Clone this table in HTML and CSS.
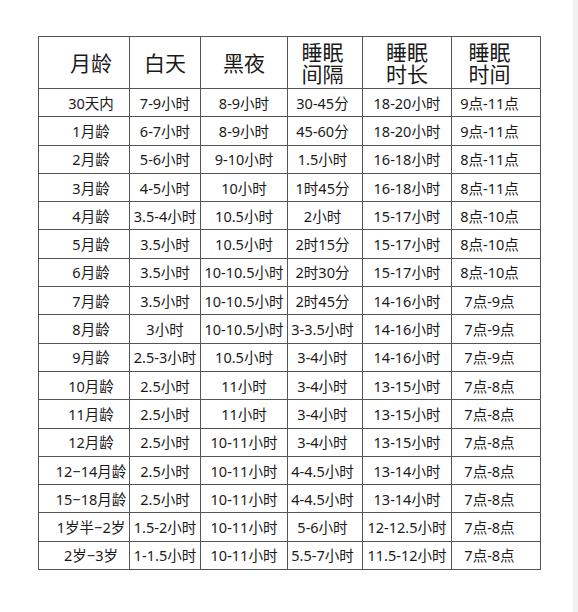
FILE: index.html
```html
<!DOCTYPE html>
<html lang="zh-CN">
<head>
<meta charset="utf-8">
<title>宝宝睡眠时间表</title>
<link rel="stylesheet" href="styles.css">
</head>
<body>
<div class="page">
<table class="sleep">
  <colgroup>
    <col class="c1"><col class="c2"><col class="c3"><col class="c4"><col class="c5"><col class="c6">
  </colgroup>
  <thead>
    <tr>
      <th class="first">月龄</th><th>白天</th><th>黑夜</th><th class="mid"><span class="ln">睡眠</span><span class="ln">间隔</span></th><th><span class="ln">睡眠</span><span class="ln">时长</span></th><th class="last"><span class="ln">睡眠</span><span class="ln">时间</span></th>
    </tr>
  </thead>
  <tbody>
    <tr><td class="first">30天内</td><td>7-9小时</td><td>8-9小时</td><td class="mid">30-45分</td><td>18-20小时</td><td class="last">9点-11点</td></tr>
    <tr><td class="first">1月龄</td><td>6-7小时</td><td>8-9小时</td><td class="mid">45-60分</td><td>18-20小时</td><td class="last">9点-11点</td></tr>
    <tr><td class="first">2月龄</td><td>5-6小时</td><td>9-10小时</td><td class="mid">1.5小时</td><td>16-18小时</td><td class="last">8点-11点</td></tr>
    <tr><td class="first">3月龄</td><td>4-5小时</td><td>10小时</td><td class="mid">1时45分</td><td>16-18小时</td><td class="last">8点-11点</td></tr>
    <tr><td class="first">4月龄</td><td>3.5-4小时</td><td>10.5小时</td><td class="mid">2小时</td><td>15-17小时</td><td class="last">8点-10点</td></tr>
    <tr><td class="first">5月龄</td><td>3.5小时</td><td>10.5小时</td><td class="mid">2时15分</td><td>15-17小时</td><td class="last">8点-10点</td></tr>
    <tr><td class="first">6月龄</td><td>3.5小时</td><td>10-10.5小时</td><td class="mid">2时30分</td><td>15-17小时</td><td class="last">8点-10点</td></tr>
    <tr><td class="first">7月龄</td><td>3.5小时</td><td>10-10.5小时</td><td class="mid">2时45分</td><td>14-16小时</td><td class="last">7点-9点</td></tr>
    <tr><td class="first">8月龄</td><td>3小时</td><td>10-10.5小时</td><td class="mid">3-3.5小时</td><td>14-16小时</td><td class="last">7点-9点</td></tr>
    <tr><td class="first">9月龄</td><td>2.5-3小时</td><td>10.5小时</td><td class="mid">3-4小时</td><td>14-16小时</td><td class="last">7点-9点</td></tr>
    <tr><td class="first">10月龄</td><td>2.5小时</td><td>11小时</td><td class="mid">3-4小时</td><td>13-15小时</td><td class="last">7点-8点</td></tr>
    <tr><td class="first">11月龄</td><td>2.5小时</td><td>11小时</td><td class="mid">3-4小时</td><td>13-15小时</td><td class="last">7点-8点</td></tr>
    <tr><td class="first">12月龄</td><td>2.5小时</td><td>10-11小时</td><td class="mid">3-4小时</td><td>13-15小时</td><td class="last">7点-8点</td></tr>
    <tr><td class="first">12−14月龄</td><td>2.5小时</td><td>10-11小时</td><td class="mid">4-4.5小时</td><td>13-14小时</td><td class="last">7点-8点</td></tr>
    <tr><td class="first">15−18月龄</td><td>2.5小时</td><td>10-11小时</td><td class="mid">4-4.5小时</td><td>13-14小时</td><td class="last">7点-8点</td></tr>
    <tr><td class="first">1岁半−2岁</td><td>1.5-2小时</td><td>10-11小时</td><td class="mid">5-6小时</td><td>12-12.5小时</td><td class="last">7点-8点</td></tr>
    <tr><td class="first">2岁−3岁</td><td>1-1.5小时</td><td>10-11小时</td><td class="mid">5.5-7小时</td><td>11.5-12小时</td><td class="last">7点-8点</td></tr>
  </tbody>
</table>
</div>
</body>
</html>
```
FILE: styles.css
```css
html {
  background: linear-gradient(to right, #ffffff 573px, #f1f1f1 573px);
  min-height: 100%;
}
body {
  margin: 0;
  font-family: "Noto Sans", "Noto Sans CJK SC", sans-serif;
  color: #1a1a1a;
}
.page {
  padding: 36px 0 0 38px;
}
.sleep {
  border-collapse: collapse;
  table-layout: fixed;
  width: 502px;
}
.c1 { width: 91px; }
.c2 { width: 71px; }
.c3 { width: 87px; }
.c4 { width: 75px; }
.c5 { width: 89px; }
.c6 { width: 89px; }

.sleep th,
.sleep td {
  border: 1px solid #555555;
  padding: 0;
  text-align: center;
  white-space: nowrap;
  overflow: visible;
}
.sleep th {
  height: 51px;
  font-size: 21px;
  font-weight: normal;
  line-height: 22px;
}
.sleep .ln {
  display: block;
  height: 22px;
  line-height: 22px;
}
.sleep td {
  height: 27.3px;
  font-size: 14.5px;
  line-height: 18px;
}
.sleep .first {
  padding-left: 14px;
}
.sleep .mid {
  padding-right: 5px;
}
.sleep .last {
  padding-right: 13px;
}
```
